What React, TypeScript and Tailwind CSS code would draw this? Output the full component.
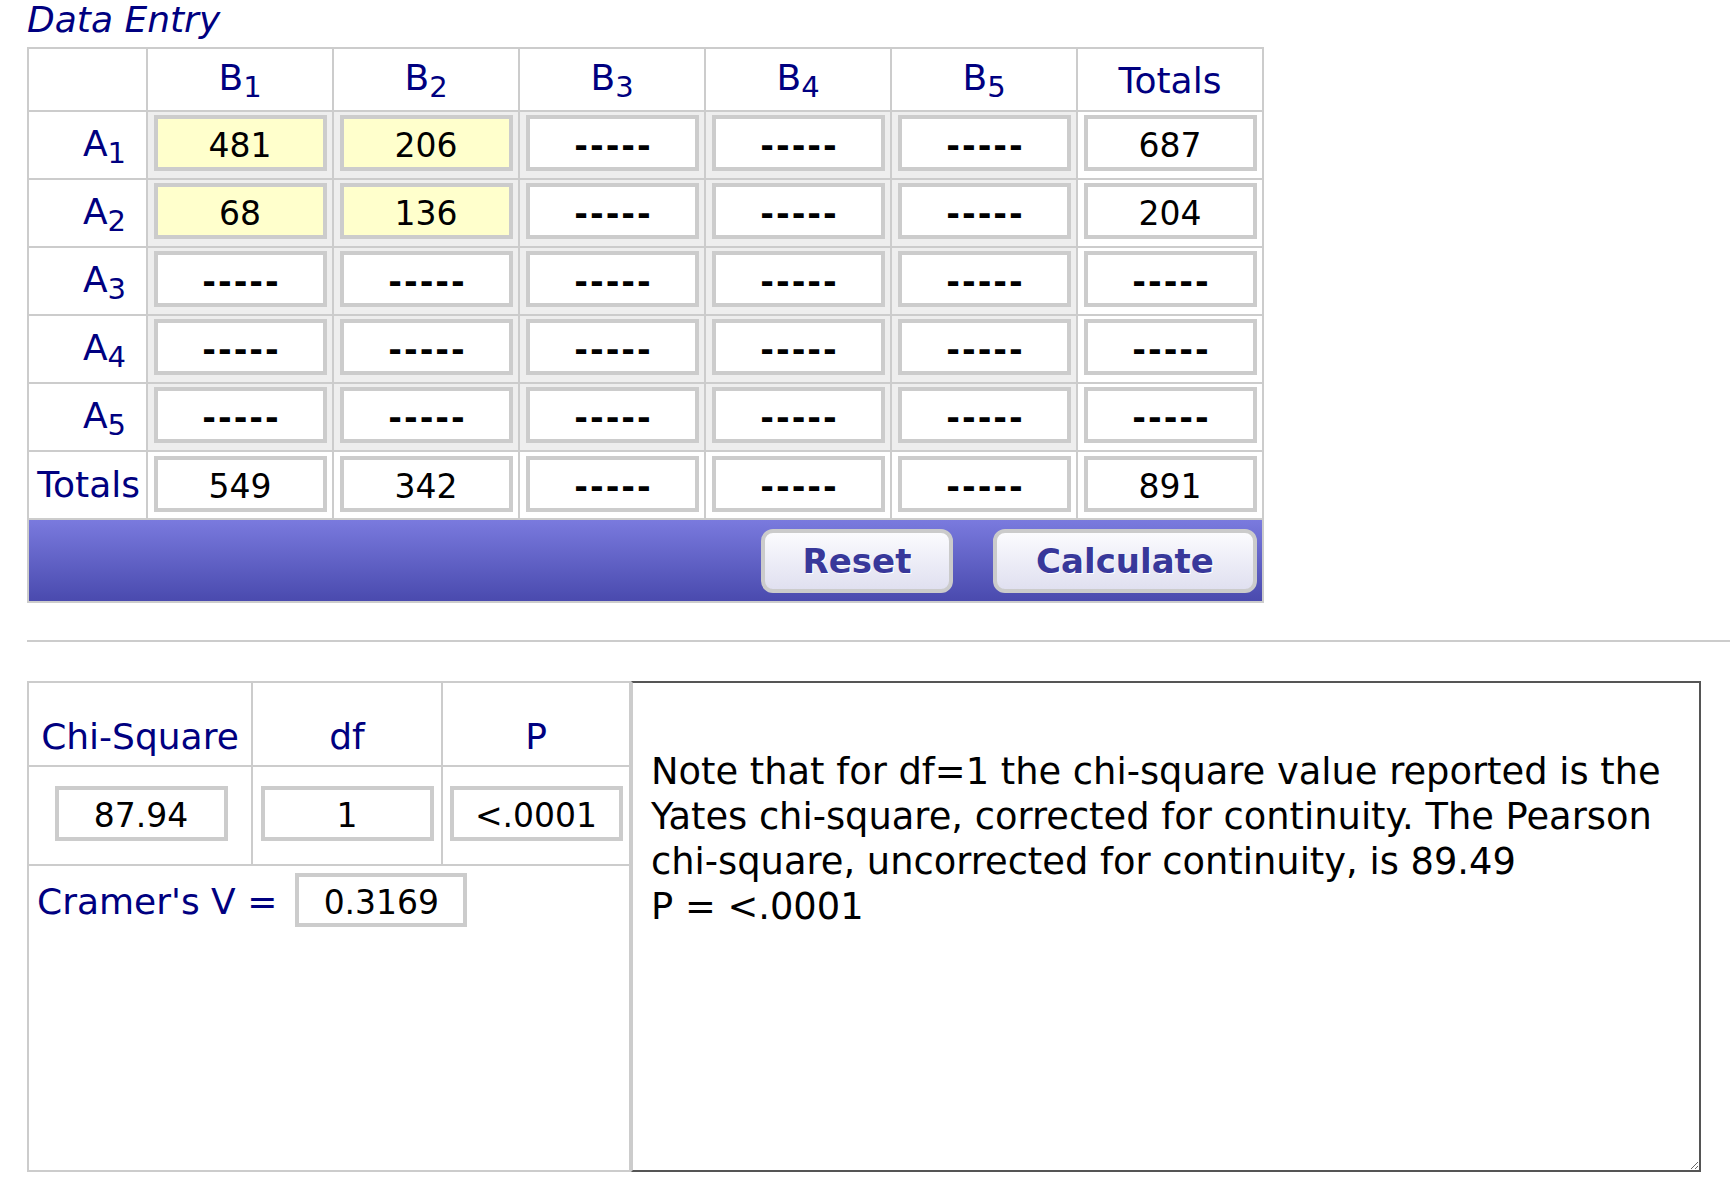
import React from "react";
import clsx from "clsx";

const dash = "-----";

const rows = [
  { sub: "1", cells: ["481", "206", dash, dash, dash, "687"] },
  { sub: "2", cells: ["68", "136", dash, dash, dash, "204"] },
  { sub: "3", cells: [dash, dash, dash, dash, dash, dash] },
  { sub: "4", cells: [dash, dash, dash, dash, dash, dash] },
  { sub: "5", cells: [dash, dash, dash, dash, dash, dash] },
];

const totals = ["549", "342", dash, dash, dash, "891"];

const note =
  "\nNote that for df=1 the chi-square value reported is the\nYates chi-square, corrected for continuity. The Pearson\nchi-square, uncorrected for continuity, is 89.49\nP = <.0001";

function Box({ value, yellow, className }: { value: string; yellow?: boolean; className?: string }) {
  return (
    <div
      className={clsx(
        "flex items-center justify-center border-[4px] border-[#ccc] pt-[4px] text-[33px] leading-none text-black",
        yellow ? "bg-[#ffffcc]" : "bg-white",
        className
      )}
    >
      <span className={value === dash ? "pl-[3px] font-bold tracking-[2px]" : ""}>{value}</span>
    </div>
  );
}

function Label({ letter, sub }: { letter: string; sub: string }) {
  return (
    <span>
      {letter}
      <sub className="text-[29px]">{sub}</sub>
    </span>
  );
}

function Button({ children, className }: { children: React.ReactNode; className?: string }) {
  return (
    <button
      className={clsx(
        "flex h-[64px] items-center justify-center rounded-[12px] border-[4px] border-[#cbcbcb] bg-gradient-to-b from-[#fbfbfe] to-[#e0e0f0] text-[34px] font-bold text-[#38389a] [text-shadow:1px_1px_0_#fff]",
        className
      )}
    >
      {children}
    </button>
  );
}

export default function App() {
  return (
    <div className="min-h-[1185px] w-full bg-white font-['DejaVu_Sans',Verdana,sans-serif] text-[#000080]">
      <div className="pl-[27px]">
        <div className="text-[36px] italic leading-[39px]">Data Entry</div>

        {/* contingency table */}
        <div className="mt-[8px] w-[1237px] bg-[#ccc] p-[2px]">
          <div className="grid grid-cols-[117px_repeat(6,184px)] gap-[2px]">
            <div className="h-[61px] bg-white" />
            {["1", "2", "3", "4", "5"].map((n) => (
              <div key={n} className="flex h-[61px] items-center justify-center bg-white pb-[4px] text-[36px] leading-[42px]">
                <Label letter="B" sub={n} />
              </div>
            ))}
            <div className="flex h-[61px] items-center justify-center bg-white pt-[2px] text-[36px] leading-[42px]">Totals</div>

            {rows.map((r, ri) => (
              <React.Fragment key={r.sub}>
                <div className="flex h-[66px] items-center justify-end bg-white pb-[2px] pr-[20px] text-[36px] leading-[42px]">
                  <Label letter="A" sub={r.sub} />
                </div>
                {r.cells.map((c, ci) => (
                  <div
                    key={ci}
                    className={clsx("flex h-[66px] justify-center pt-[3px]", ci < 5 ? "bg-[#eee]" : "bg-white")}
                  >
                    <Box value={c} yellow={ri < 2 && ci < 2} className="h-[56px] w-[173px]" />
                  </div>
                ))}
              </React.Fragment>
            ))}

            <div className="flex h-[66px] items-center justify-end bg-white pr-[6px] text-[36px] leading-[42px]">Totals</div>
            {totals.map((c, ci) => (
              <div key={ci} className="flex h-[66px] justify-center bg-white pt-[4px]">
                <Box value={c} className="h-[56px] w-[173px]" />
              </div>
            ))}
          </div>
          <div className="mt-[2px] flex h-[81px] items-start justify-end gap-[40px] bg-gradient-to-b from-[#7a7ade] to-[#4a4aae] pr-[5px] pt-[9px]">
            <Button className="w-[192px]">Reset</Button>
            <Button className="w-[264px]">Calculate</Button>
          </div>
        </div>

        <div className="mt-[37px] h-[2px] bg-[#ccc]" />

        {/* results */}
        <div className="mt-[39px] flex h-[491px]">
          <div className="flex w-[604px] flex-col bg-[#ccc] p-[2px]">
            <div className="grid grid-cols-[222px_188px_186px] gap-[2px]">
              <div className="flex h-[82px] items-end justify-center bg-white pb-[7px] text-[36px] leading-[42px]">Chi-Square</div>
              <div className="flex h-[82px] items-end justify-center bg-white pb-[7px] text-[36px] leading-[42px]">df</div>
              <div className="flex h-[82px] items-end justify-center bg-white pb-[7px] text-[36px] leading-[42px]">P</div>
              <div className="flex h-[97px] justify-center bg-white pl-[2px] pt-[19px]">
                <Box value="87.94" className="h-[55px] w-[173px]" />
              </div>
              <div className="flex h-[97px] justify-center bg-white pt-[19px]">
                <Box value="1" className="h-[55px] w-[173px]" />
              </div>
              <div className="flex h-[97px] justify-center bg-white pt-[19px]">
                <Box value="<.0001" className="h-[55px] w-[173px]" />
              </div>
            </div>
            <div className="mt-[2px] flex flex-1 items-start gap-[18px] bg-white pl-[8px] pt-[7px]">
              <div className="flex h-[54px] items-center pt-[3px] text-[36px] leading-[42px]">Cramer's V =</div>
              <Box value="0.3169" className="h-[54px] w-[172px]" />
            </div>
          </div>
          <textarea
            readOnly
            wrap="off"
            value={note}
            className="h-[491px] w-[1070px] resize overflow-hidden border-[2px] border-[#555] border-l-[#ccc] bg-white px-[18px] pt-[21px] font-['DejaVu_Sans',Verdana,sans-serif] text-[36.8px] leading-[45px] text-black outline-none"
          />
        </div>
      </div>
    </div>
  );
}
